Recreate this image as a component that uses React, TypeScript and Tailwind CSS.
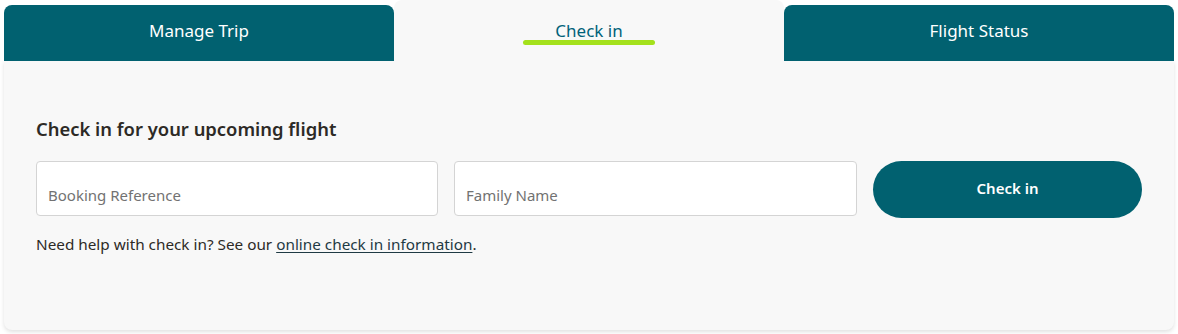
import { useState } from 'react';

const tabs = ['Manage Trip', 'Check in', 'Flight Status'];

export default function App() {
  const [active, setActive] = useState(1);

  return (
    <div
      className="min-h-[334px] bg-white px-1 text-[#2d2a26]"
      style={{ fontFamily: '"Noto Sans", Arial, sans-serif' }}
    >
      {/* Tab strip — the active tab merges into the card below. */}
      <div className="grid h-[61px] grid-cols-3 items-end">
        {tabs.map((label, index) =>
          index === active ? (
            <button
              key={label}
              onClick={() => setActive(index)}
              className="relative flex h-[61px] items-start justify-center rounded-t-lg bg-[#f8f8f8] pt-[18px] text-[17px] text-[#00627a]"
            >
              {label}
              <span className="absolute top-[40px] left-1/2 h-[5px] w-[132px] -translate-x-1/2 rounded-full bg-[#a4e11c]" />
            </button>
          ) : (
            <button
              key={label}
              onClick={() => setActive(index)}
              className="flex h-[56px] items-start justify-center rounded-t-lg bg-[#016170] pt-[13px] text-[17px] text-white"
            >
              {label}
            </button>
          ),
        )}
      </div>

      <div className="h-[269px] rounded-b-lg bg-[#f8f8f8] px-8 pt-[56px] shadow-[0_2px_4px_rgba(0,0,0,0.12)]">
        <h2 className="text-[18.4px] leading-6 font-semibold">Check in for your upcoming flight</h2>

        <div className="mt-[20px] grid grid-cols-[402px_403px_1fr] items-start gap-4">
          <input
            placeholder="Booking Reference"
            className="h-[55px] rounded border border-[#d4d4d4] bg-white px-[11px] pt-[12px] text-[15px] placeholder:text-[#727272] focus:outline-none"
          />
          <input
            placeholder="Family Name"
            className="h-[55px] rounded border border-[#d4d4d4] bg-white px-[11px] pt-[12px] text-[15px] placeholder:text-[#727272] focus:outline-none"
          />
          <button className="h-[57px] rounded-full bg-[#016170] pb-[3px] text-[15px] font-semibold text-white">
            Check in
          </button>
        </div>

        <p className="mt-[16px] text-[15.3px] leading-5">
          Need help with check in? See our{' '}
          <a href="#" className="text-[#1f3a44] underline underline-offset-2">
            online check in information
          </a>
          .
        </p>
      </div>
    </div>
  );
}
